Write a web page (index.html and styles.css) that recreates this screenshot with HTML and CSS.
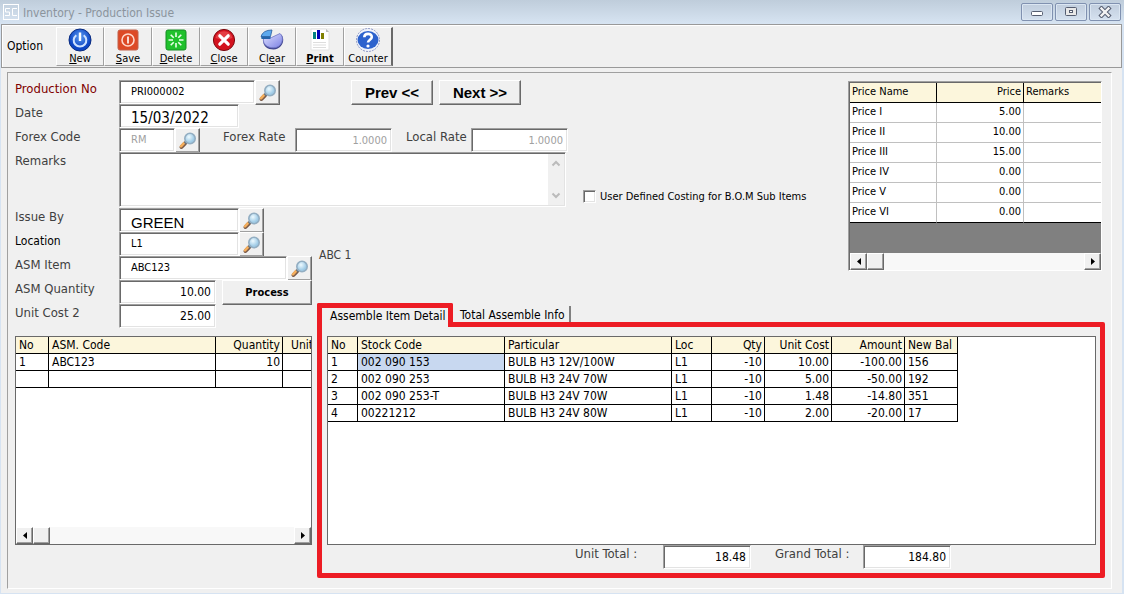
FILE: index.html
```html
<!DOCTYPE html>
<html lang="en">
<head>
    <meta charset="UTF-8">
    <meta name="viewport" content="width=device-width, initial-scale=1.0">
    <title>Inventory - Production Issue</title>
    <link rel="stylesheet" href="styles.css">
</head>
<body>
    <svg class="defs" aria-hidden="true">
        <defs>
            <radialGradient id="blue" cx="50%" cy="35%"><stop offset="0" stop-color="#5b9af0"/><stop offset="1" stop-color="#0d45c4"/></radialGradient>
            <radialGradient id="lens" cx="40%" cy="35%"><stop offset="0" stop-color="#eefaff"/><stop offset="1" stop-color="#9fcbe6"/></radialGradient>
            <linearGradient id="pie" x1="0" y1="0" x2="1" y2="1"><stop offset="0" stop-color="#e0e2ff"/><stop offset="1" stop-color="#7b80e4"/></linearGradient>
        </defs>
        <symbol id="search" viewBox="0 0 20 20">
            <path d="M3.5 16 7 12.300" stroke="#7a5a48" stroke-width="4" stroke-linecap="round"/>
            <path d="M3 15.300 6 12.200" stroke="#f5ae5c" stroke-width="2.6" stroke-linecap="round"/>
            <path d="M6.800 12.300 9 10" stroke="#66727e" stroke-width="2.6"/>
            <circle cx="12" cy="7.500" r="5.200" fill="url(#lens)" stroke="#93aec2" stroke-width="1.6"/>
        </symbol>
    </svg>

    <header class="titlebar">
        <svg class="app-icon" viewBox="0 0 16 16" fill="none" stroke="#fff">
            <rect x=".5" y=".5" width="15" height="15"/>
            <path d="M7 4.5H2.5V8H6.5V11.5H2M14 4.5H9.5V11.5H14"/>
        </svg>
        <span class="caption">Inventory - Production Issue</span>
        <button class="win-btn" aria-label="Minimize"><svg viewBox="0 0 14 12"><rect x="1.500" y="5.500" width="11" height="4" rx="1" fill="#fff" stroke="#555d70"/></svg></button>
        <button class="win-btn" aria-label="Maximize"><svg viewBox="0 0 14 12"><rect x="1.500" y="1.500" width="11" height="8" rx="1" fill="#e8e8e8" stroke="#555d70"/><rect x="5.500" y="4.500" width="3" height="2" fill="#fff" stroke="#555d70"/></svg></button>
        <button class="win-btn" aria-label="Close window"><svg viewBox="0 0 14 12"><path d="M3.5 2.5 10.5 9.5M10.5 2.5 3.5 9.5" stroke="#555d70" stroke-width="4.4" stroke-linecap="square"/><path d="M3.5 2.5 10.5 9.5M10.5 2.5 3.5 9.5" stroke="#f4f4f4" stroke-width="2.4" stroke-linecap="square"/></svg></button>
    </header>

    <nav class="toolbar">
        <span class="toolbar-label">Option</span>
        <button class="tool">
            <svg viewBox="0 0 24 24"><circle cx="12" cy="12" r="11" fill="url(#blue)" stroke="#0a2c80"/><path d="M8.3 7.2a6.3 6.3 0 1 0 7.4 0" fill="none" stroke="#cfe2ff" stroke-width="2"/><path d="M12 4.5V13" stroke="#fff" stroke-width="2.4"/></svg>
            <span><u>N</u>ew</span>
        </button>
        <button class="tool">
            <svg viewBox="0 0 24 24"><rect x="2" y="2" width="20" height="20" rx="2" fill="#dd4a26" stroke="#c2604a"/><circle cx="12" cy="12" r="6" fill="none" stroke="#ffd9cc" stroke-width="1.6"/><path d="M12 8.5V15.5" stroke="#fff" stroke-width="1.6"/></svg>
            <span><u>S</u>ave</span>
        </button>
        <button class="tool">
            <svg viewBox="0 0 24 24"><rect x="2" y="2" width="20" height="20" rx="2" fill="#1fc12c" stroke="#168c24"/><path d="M12 4.5V9M12 15V19.5M4.5 12H9M15 12H19.5M6.7 6.7 9.7 9.7M14.3 14.3 17.3 17.3M17.3 6.7 14.3 9.7M9.7 14.3 6.7 17.3" stroke="#eaffea" stroke-width="1.6"/></svg>
            <span><u>D</u>elete</span>
        </button>
        <button class="tool">
            <svg viewBox="0 0 24 24"><circle cx="12" cy="12" r="10.6" fill="#d3121e" stroke="#7d0a10"/><path d="M3.5 10a8.7 8.7 0 0 1 17 0q-8 3-17 0" fill="#ee5a5c" opacity=".6"/><path d="M7.8 7.8 16.2 16.2M16.2 7.8 7.8 16.2" stroke="#fff" stroke-width="3.2" stroke-linecap="round"/></svg>
            <span><u>C</u>lose</span>
        </button>
        <button class="tool">
            <svg viewBox="0 0 24 24"><path d="M11 10.500 20.500 6C26 10 23 21.500 13.500 21.500 6.500 21.500 2 17 3.500 11Z" fill="#40448e"/><path d="M11.500 9.500 20 5.500C25 9.500 22 19.800 13.500 19.800 7 19.800 2.500 16 3.500 10.500Z" fill="url(#pie)" stroke="#6f76c4" stroke-width=".8"/><path d="M1 8.500Q3 2 12 2L10.500 8.500Z" fill="#5da9ee" stroke="#245a9c" stroke-width=".8"/><path d="M1 8.500H10.500V11H1.500Z" fill="#2465ad"/></svg>
            <span>Cl<u>e</u>ar</span>
        </button>
        <button class="tool strong">
            <svg viewBox="0 0 24 24"><path d="M3 1H18L21 4V22H3Z" fill="#fff" stroke="#e2e2e2"/><path d="M18 1V4H21" fill="#bbb"/><rect x="5" y="4" width="3" height="7" fill="#008080"/><rect x="9" y="2" width="3" height="9" fill="#0000b8"/><rect x="13" y="5" width="3" height="6" fill="#808000"/><path d="M5 14.500H18M5 17H18M5 19.500H18" stroke="#ddd"/></svg>
            <span><u>P</u>rint</span>
        </button>
        <button class="tool">
            <svg class="wide" viewBox="0 0 28 24"><circle cx="14" cy="12" r="11.500" fill="#eef2fb" stroke="#8d97c4" stroke-dasharray="2 1"/><ellipse cx="14" cy="12" rx="10.500" ry="9" fill="#2c62cd"/><path d="M10.300 9.300C10.300 4.800 17.800 4.800 17.800 9 17.800 11.800 14 11.600 14 14.600" fill="none" stroke="#fff" stroke-width="2.600"/><circle cx="14" cy="18" r="1.600" fill="#fff"/></svg>
            <span>Counter</span>
        </button>
    </nav>

    <main class="panel">
        <form class="header-form">
            <div class="fields">
                <div class="row">
                    <label class="name required" for="prodNo">Production No</label>
                    <input class="box w-no small" id="prodNo" type="text" value="PRI000002">
                    <button type="button" class="bevel lookup" aria-label="Find production"><svg><use href="#search"/></svg></button>
                    <div class="record-nav">
                        <button type="button" class="bevel step">Prev &lt;&lt;</button>
                        <button type="button" class="bevel step">Next &gt;&gt;</button>
                    </div>
                </div>
                <div class="row">
                    <label class="name" for="date">Date</label>
                    <input class="box w-mid large" id="date" type="text" value="15/03/2022">
                </div>
                <div class="row">
                    <label class="name" for="forexCode">Forex Code</label>
                    <input class="box w-code small" id="forexCode" type="text" value="RM" disabled>
                    <button type="button" class="bevel lookup" aria-label="Find forex code"><svg><use href="#search"/></svg></button>
                    <label class="rate-name" for="forexRate">Forex Rate</label>
                    <input class="box w-num num" id="forexRate" type="text" value="1.0000" disabled>
                    <label class="rate-name local" for="localRate">Local Rate</label>
                    <input class="box w-num num" id="localRate" type="text" value="1.0000" disabled>
                </div>
                <div class="row">
                    <label class="name" for="remarks">Remarks</label>
                    <div class="box remarks">
                        <textarea id="remarks"></textarea>
                        <div class="vscroll">
                            <svg viewBox="0 0 9 7"><path d="M1 5.500 4.500 2 8 5.500"/></svg>
                            <svg viewBox="0 0 9 7"><path d="M1 1.500 4.500 5 8 1.500"/></svg>
                        </div>
                    </div>
                </div>
            </div>
            <label class="check"><input type="checkbox"> User Defined Costing for B.O.M Sub Items</label>
        </form>

        <section class="prices">
            <div class="grid-body">
                <table class="price-table">
                    <colgroup><col class="c-name"><col class="c-price"><col></colgroup>
                    <thead><tr><th>Price Name</th><th class="num">Price</th><th>Remarks</th></tr></thead>
                    <tbody>
                        <tr><td>Price I</td><td class="num">5.00</td><td></td></tr>
                        <tr><td>Price II</td><td class="num">10.00</td><td></td></tr>
                        <tr><td>Price III</td><td class="num">15.00</td><td></td></tr>
                        <tr><td>Price IV</td><td class="num">0.00</td><td></td></tr>
                        <tr><td>Price V</td><td class="num">0.00</td><td></td></tr>
                        <tr><td>Price VI</td><td class="num">0.00</td><td></td></tr>
                    </tbody>
                </table>
            </div>
            <div class="hscroll">
                <button class="bevel" aria-label="Scroll left"><svg viewBox="0 0 4 7"><path d="M4 0V7L0 3.500Z"/></svg></button>
                <span class="bevel thumb"></span>
                <button class="bevel end" aria-label="Scroll right"><svg viewBox="0 0 4 7"><path d="M0 0V7L4 3.500Z"/></svg></button>
            </div>
        </section>

        <section class="assembly">
            <div class="row">
                <label class="name" for="issueBy">Issue By</label>
                <input class="box w-mid large arial" id="issueBy" type="text" value="GREEN">
                <button class="bevel lookup" aria-label="Find issuer"><svg><use href="#search"/></svg></button>
            </div>
            <div class="row">
                <label class="name dark" for="location">Location</label>
                <input class="box w-mid small" id="location" type="text" value="L1">
                <button class="bevel lookup" aria-label="Find location"><svg><use href="#search"/></svg></button>
            </div>
            <div class="row">
                <label class="name" for="asmItem">ASM Item</label>
                <input class="box w-item small" id="asmItem" type="text" value="ABC123">
                <button class="bevel lookup" aria-label="Find ASM item"><svg><use href="#search"/></svg></button>
            </div>
            <div class="row">
                <label class="name" for="asmQty">ASM Quantity</label>
                <input class="box w-num num" id="asmQty" type="text" value="10.00">
                <button class="bevel process">Process</button>
            </div>
            <div class="row">
                <label class="name" for="unitCost">Unit Cost 2</label>
                <input class="box w-num num" id="unitCost" type="text" value="25.00">
            </div>
            <div class="grid asm-grid">
                <div class="grid-body">
                    <table class="asm-table">
                        <colgroup><col class="c-no"><col class="c-code"><col class="c-qty"><col></colgroup>
                        <thead><tr><th>No</th><th>ASM. Code</th><th class="num">Quantity</th><th class="unit">Unit</th></tr></thead>
                        <tbody>
                            <tr><td>1</td><td>ABC123</td><td class="num">10</td><td></td></tr>
                            <tr><td></td><td></td><td></td><td></td></tr>
                        </tbody>
                    </table>
                </div>
                <div class="hscroll">
                    <button class="bevel" aria-label="Scroll left"><svg viewBox="0 0 4 7"><path d="M4 0V7L0 3.500Z"/></svg></button>
                    <span class="bevel thumb"></span>
                    <button class="bevel end" aria-label="Scroll right"><svg viewBox="0 0 4 7"><path d="M0 0V7L4 3.500Z"/></svg></button>
                </div>
            </div>
        </section>

        <p class="item-name">ABC 1</p>

        <section class="detail">
            <div class="tabs">
                <button class="tab active">Assemble Item Detail</button>
                <button class="tab">Total Assemble Info</button>
            </div>
            <div class="tab-content">
                <div class="grid">
                    <table class="detail-table">
                        <colgroup><col class="d-no"><col class="d-stock"><col class="d-part"><col class="d-loc"><col class="d-qty"><col class="d-cost"><col class="d-amount"><col class="d-bal"></colgroup>
                        <thead>
                            <tr><th>No</th><th>Stock Code</th><th>Particular</th><th>Loc</th><th class="num">Qty</th><th class="num">Unit Cost</th><th class="num">Amount</th><th>New Bal</th></tr>
                        </thead>
                        <tbody>
                            <tr><td>1</td><td class="selected">002 090 153</td><td>BULB H3 12V/100W</td><td>L1</td><td class="num">-10</td><td class="num">10.00</td><td class="num">-100.00</td><td>156</td></tr>
                            <tr><td>2</td><td>002 090 253</td><td>BULB H3 24V 70W</td><td>L1</td><td class="num">-10</td><td class="num">5.00</td><td class="num">-50.00</td><td>192</td></tr>
                            <tr><td>3</td><td>002 090 253-T</td><td>BULB H3 24V 70W</td><td>L1</td><td class="num">-10</td><td class="num">1.48</td><td class="num">-14.80</td><td>351</td></tr>
                            <tr><td>4</td><td>00221212</td><td>BULB H3 24V 80W</td><td>L1</td><td class="num">-10</td><td class="num">2.00</td><td class="num">-20.00</td><td>17</td></tr>
                        </tbody>
                    </table>
                </div>
                <div class="totals">
                    <label for="unitTotal">Unit Total :</label>
                    <input class="box num" id="unitTotal" type="text" value="18.48">
                    <label for="grandTotal">Grand Total :</label>
                    <input class="box num" id="grandTotal" type="text" value="184.80">
                </div>
            </div>
        </section>
    </main>
</body>
</html>
```
FILE: styles.css
```css
* {
    box-sizing: border-box;
}

body {
    margin: 0;
    min-height: 100vh;
    display: flex;
    flex-direction: column;
    padding: 0 2px 1px 1px;
    background-color: #d6e3f2;
    font-family: "DejaVu Sans Condensed", "Noto Sans", sans-serif;
    font-size: 12px;
    color: #000;
}

button, input, textarea {
    font: inherit;
    color: inherit;
    margin: 0;
    padding: 0;
}

.defs {
    position: absolute;
    width: 0;
    height: 0;
}

/* title bar */
.titlebar {
    display: flex;
    align-items: center;
    height: 24px;
    margin: 0 -2px 0 -1px;
    padding: 0 3px;
    background: linear-gradient(#bfcddb, #d7e4f2);
}

.app-icon {
    width: 16px;
    height: 16px;
}

.caption {
    flex: 1;
    padding: 2px 0 0 4px;
    color: #8b949d;
}

.win-btn {
    display: flex;
    align-items: center;
    justify-content: center;
    width: 32px;
    height: 18px;
    margin-left: 2px;
    border: 1px solid #8091b0;
    border-radius: 2px;
    background: linear-gradient(#c0cddd, #d5e1ef);
    box-shadow: inset 0 0 0 1px #dbe6f2;
}

.win-btn svg {
    width: 14px;
    height: 12px;
}

/* toolbar */
.toolbar {
    display: flex;
    height: 44px;
    padding: 2px 0 1px;
    background-color: #f0f0f0;
    border: 1px solid #999;
    box-shadow: inset 1px 1px #fff, 0 1px #fff;
}

.toolbar-label {
    width: 54px;
    padding: 12px 0 0 5px;
}

.tool {
    display: flex;
    flex-direction: column;
    align-items: center;
    width: 48px;
    font-size: 11px;
    line-height: 13px;
    background-color: #f0f0f0;
    border: 1px solid;
    border-color: #fff #a0a0a0 #a0a0a0 #fff;
}

.tool:last-child {
    width: 49px;
    border-right: 2px solid #696969;
}

.tool svg {
    flex: none;
    width: 24px;
    height: 24px;
}

.tool .wide {
    width: 28px;
}

.tool.strong {
    font-weight: bold;
}

/* work area */
.panel {
    flex: 1;
    display: grid;
    grid-template-columns: 297px 1fr 254px;
    grid-template-rows: 128px 95px 1fr;
    column-gap: 5px;
    padding: 11px 17px 15px 14px;
    background-color: #f0f0f0;
    position: relative;
}

/* sunken outline of the work area */
.panel::before {
    content: "";
    position: absolute;
    inset: 4px 10px 4px 6px;
    border: 1px solid;
    border-color: #a0a0a0 #fff #fff #a0a0a0;
    pointer-events: none;
}

.header-form {
    grid-area: 1 / 1 / 2 / 3;
    display: flex;
    align-items: flex-end;
    gap: 15px;
    padding-top: 1px;
    z-index: 1;
}

.fields {
    width: 553px;
    height: 100%;
}

.row {
    display: flex;
    align-items: flex-start;
    height: 24px;
    flex: none;
}

.name {
    width: 104px;
}

.name, .rate-name, .totals label {
    font-size: 13px;
    line-height: 18px;
    color: #404040;
    white-space: nowrap;
}

.name.required {
    color: #800000;
}

.name.dark {
    font-size: 12px;
    color: #000;
}

.rate-name {
    width: 95px;
    padding-left: 23px;
}

.rate-name.local {
    width: 79px;
    padding-left: 14px;
}

.box {
    height: 24px;
    padding: 2px 4px;
    background-color: #fff;
    border: 1px solid;
    border-color: #a0a0a0 #fff #fff #a0a0a0;
    border-radius: 0;
    box-shadow: inset 1px 1px #696969, inset -1px -1px #e3e3e3;
}

.box:disabled {
    font-size: 11px;
    color: #a0a0a0;
}

.box.small {
    padding: 0 4px 2px 11px;
    font-size: 11px;
}

.box.large {
    padding: 4px 4px 0 11px;
    font-size: 15px;
}

.arial {
    font-family: "Liberation Sans", Arial, sans-serif;
}

.w-no { width: 136px; }
.w-mid { width: 120px; }
.w-code { width: 56px; }
.w-item { width: 168px; }
.w-num { width: 97px; }

.num {
    text-align: right;
}

.bevel {
    background-color: #f0f0f0;
    border: 1px solid;
    border-color: #fff #696969 #696969 #fff;
    box-shadow: inset -1px -1px #a0a0a0;
}

.lookup {
    display: flex;
    align-items: center;
    justify-content: center;
    width: 25px;
    height: 25px;
}

.lookup svg {
    width: 20px;
    height: 20px;
}

.record-nav {
    display: flex;
    gap: 6px;
    margin-left: 71px;
}

.step {
    width: 82px;
    height: 25px;
    font: bold 15px "Liberation Sans", Arial, sans-serif;
}

.process {
    width: 90px;
    height: 25px;
    margin-left: 6px;
    font-size: 11px;
    font-weight: bold;
}

.remarks {
    display: flex;
    flex: 1;
    max-width: 447px;
    height: 55px;
    padding: 1px;
}

.remarks textarea {
    flex: 1;
    border: none;
    resize: none;
    outline: none;
    background: none;
}

.vscroll {
    display: flex;
    flex-direction: column;
    justify-content: space-between;
    width: 16px;
    padding: 6px 3px;
    background-color: #f0f0f0;
}

.vscroll svg {
    height: 7px;
    fill: none;
    stroke: #bbb;
    stroke-width: 2;
}

.check {
    display: flex;
    align-items: center;
    gap: 4px;
    padding-bottom: 4px;
    font-size: 11px;
    white-space: nowrap;
}

.check input {
    appearance: none;
    width: 13px;
    height: 13px;
    background-color: #fff;
    border: 1px solid;
    border-color: #a0a0a0 #fff #fff #a0a0a0;
    box-shadow: inset 1px 1px #696969, inset -1px -1px #e3e3e3;
}

/* tables */
table {
    table-layout: fixed;
    border-spacing: 0;
    background-color: #fff;
}

th, td {
    height: 17px;
    padding: 1px 2px 0 3px;
    line-height: 15px;
    text-align: left;
    white-space: nowrap;
    border-right: 1px solid #000;
    border-bottom: 1px solid #000;
}

th {
    font-weight: normal;
    background-color: #fcf6dc;
}

th.num, td.num {
    text-align: right;
}

.selected {
    background-color: #c8d8f0;
}

.grid {
    display: flex;
    flex-direction: column;
    flex: 1;
    background-color: #fff;
    border: 1px solid #696969;
    overflow: hidden;
}

.grid-body {
    flex: 1;
    overflow: hidden;
}

.hscroll {
    display: flex;
    height: 17px;
    background-color: #f8f8f8;
}

.hscroll .bevel {
    display: flex;
    align-items: center;
    justify-content: center;
    width: 17px;
}

.hscroll svg {
    width: 4px;
    height: 7px;
}

.hscroll .end {
    margin-left: auto;
}

/* price list */
.prices {
    grid-area: 1 / 3 / 3 / 4;
    display: flex;
    flex-direction: column;
    height: 190px;
    margin: 2px 3px 0 -3px;
    background-color: #808080;
    border: 1px solid;
    border-color: #a0a0a0 #fff #fff #a0a0a0;
    box-shadow: inset 1px 1px #696969;
    padding: 1px 0 0 1px;
    font-size: 11px;
    z-index: 1;
}

.price-table {
    width: 100%;
}

.price-table th, .price-table td {
    height: 20px;
    padding: 0 2px;
    line-height: 18px;
    vertical-align: top;
}

.price-table td {
    border-color: #c0c0c0;
}

.price-table tr:last-child td {
    border-bottom-color: #000;
}

.price-table th {
    border-bottom-color: #000;
}

.price-table th:last-child, .price-table td:last-child {
    border-right: none;
}

.c-name { width: 87px; }
.c-price { width: 87px; }

/* assembly block */
.assembly {
    grid-area: 2 / 1 / 4 / 2;
    display: flex;
    flex-direction: column;
    padding-top: 1px;
    z-index: 1;
}

.asm-grid {
    margin: 8px 0 33px;
}

.asm-table {
    width: 340px;
}

.asm-table .unit {
    padding-left: 8px;
}

.c-no { width: 33px; }
.c-code { width: 167px; }
.c-qty { width: 67px; }

.item-name {
    grid-area: 2 / 2;
    margin: 0;
    padding: 41px 0 0 2px;
    color: #404040;
}

/* detail tabs */
.detail {
    grid-area: 3 / 2 / 4 / 4;
    display: flex;
    flex-direction: column;
    margin-top: 1px;
    z-index: 1;
}

.tabs {
    display: flex;
    align-items: flex-end;
}

.tab {
    height: 16px;
    padding: 3px 4px 0 7px;
    line-height: 13px;
    background: none;
    border: none;
    border-right: 2px solid #808080;
    white-space: nowrap;
}

.tab.active {
    height: 24px;
    width: 136px;
    margin-bottom: -5px;
    padding: 0 0 3px 8px;
    text-align: left;
    background-color: #f0f0f0;
    border: 5px solid #ed1c24;
    border-bottom: none;
    border-radius: 2px 2px 0 0;
    z-index: 1;
}

.tab-content {
    display: flex;
    flex-direction: column;
    flex: 1;
    padding: 9px 4px 4px 5px;
    border: 5px solid #ed1c24;
    border-radius: 0 2px 2px 2px;
}

.detail-table {
    width: 630px;
}

.d-no { width: 30px; }
.d-stock { width: 147px; }
.d-part { width: 167px; }
.d-loc { width: 40px; }
.d-qty { width: 53px; }
.d-cost { width: 67px; }
.d-amount { width: 73px; }
.d-bal { width: 53px; }

.totals {
    display: flex;
    padding-left: 248px;
}

.totals label {
    width: 88px;
}

.totals .box {
    width: 88px;
    margin-right: 24px;
}
```
